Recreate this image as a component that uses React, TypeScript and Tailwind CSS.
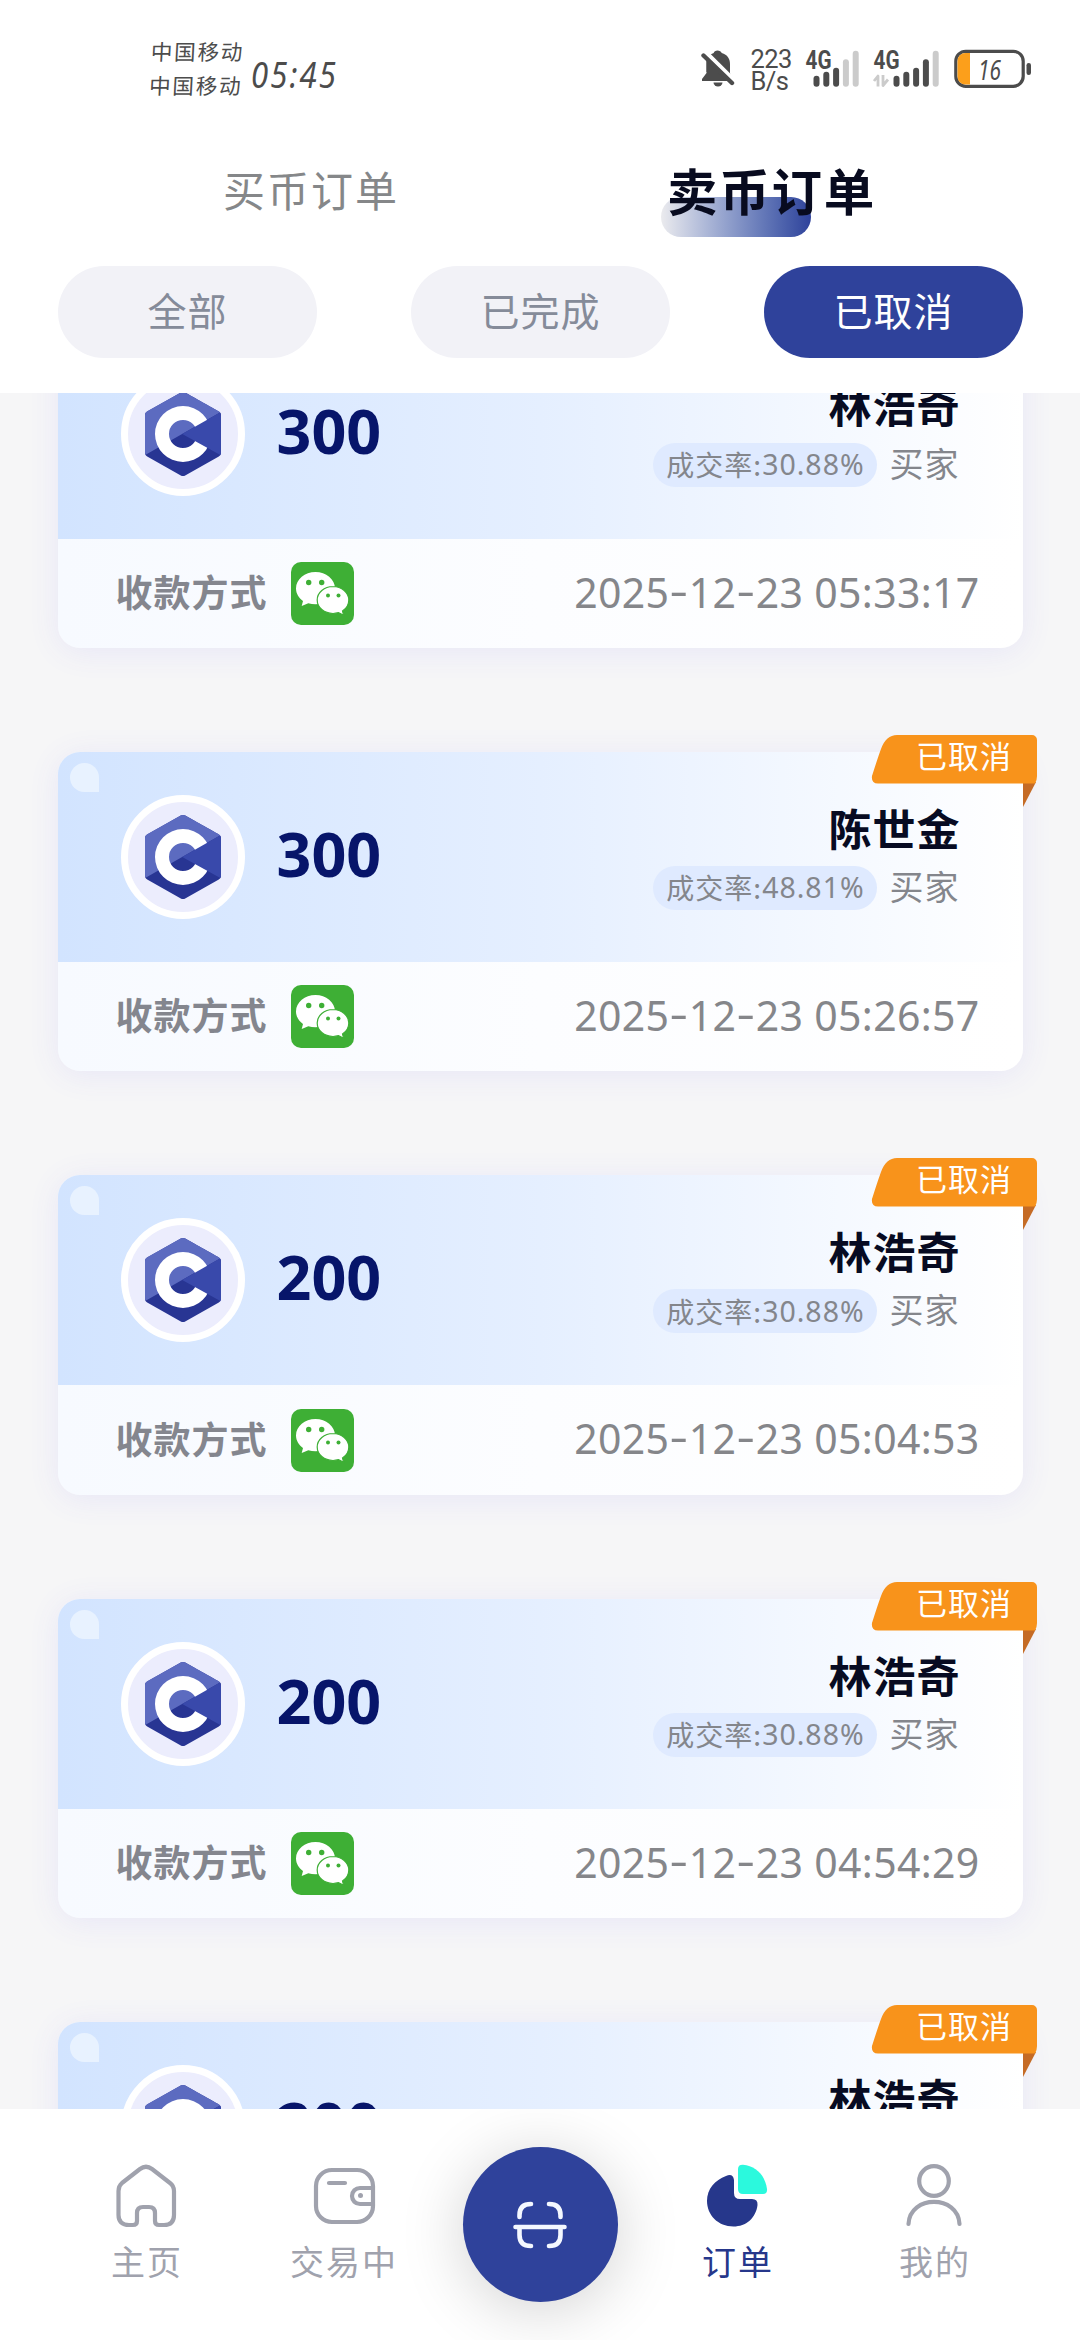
import React from "react";

type Order = { amount: string; name: string; rate: string; time?: string };

const orders: Order[] = [
  { amount: "300", name: "林浩奇", rate: "30.88%", time: "2025-12-23 05:33:17" },
  { amount: "300", name: "陈世金", rate: "48.81%", time: "2025-12-23 05:26:57" },
  { amount: "200", name: "林浩奇", rate: "30.88%", time: "2025-12-23 05:04:53" },
  { amount: "200", name: "林浩奇", rate: "30.88%", time: "2025-12-23 04:54:29" },
  { amount: "200", name: "林浩奇", rate: "30.88%" },
];

function MutedBell() {
  return (
    <svg className="h-[40px] w-[34px]" viewBox="0 0 34 40">
      <path d="M16.500 2.500c-2 0-3.500 1.200-3.800 2.600C8 6.500 5.500 10.500 5.500 15.500V25L1 31v2h31l-2-4-1-4V16c0-5-2.500-9.300-8.300-10.900-.5-1.500-2.200-2.600-4.200-2.600z" fill="#4c4c4c" />
      <path d="M12.500 34.500h9a4.500 4 0 0 1-9 0z" fill="#4c4c4c" />
      <path d="M4 3.500 34 33.500" stroke="#fff" strokeWidth="4.500" />
      <path d="M-1 0h13L5 7v13H-1z" fill="#fff" />
      <path d="M2.500 7.500 31 35" stroke="#4c4c4c" strokeWidth="4.400" strokeLinecap="round" />
      <path d="M6 11v13" stroke="#4c4c4c" strokeWidth="1" />
    </svg>
  );
}

function Signal({ solid, arrows }: { solid: number; arrows?: boolean }) {
  const tops = [27.7, 23.7, 19.7, 11.3, 2.7];
  return (
    <svg className="h-[40px] w-[66px] overflow-visible" viewBox="0 0 66 40">
      <text x="0.500" y="20.500" fontFamily="Roboto" fontWeight="700" fontSize="25" textLength="26" lengthAdjust="spacingAndGlyphs" fill="#4c4c4c">4G</text>
      {tops.map((t, i) => (
        <rect key={t} x={(arrows ? 20.5 : 8.5) + i * 9.8} y={t} width="6" height={38.7 - t} rx="3" fill={i < solid ? "#4c4c4c" : "#cbcbcb"} />
      ))}
      {arrows && (
        <path d="M1 33l4-5v10.500M10 27v10.500l5-6" fill="none" stroke="#cbcbcb" strokeWidth="2.800" strokeLinejoin="round" />
      )}
    </svg>
  );
}

function StatusBar() {
  return (
    <div className="flex h-[140px] items-start justify-between pl-[150px] pr-[48.500px] text-[#4c4c4c]">
      <div className="flex pt-[34px]">
        <div className="w-[101px] -skew-x-3 text-[21.500px] leading-[34px] tracking-[1.900px]">
          <div className="h-[34px]">中国移动</div>
          <div className="h-[34px]">中国移动</div>
        </div>
        <div className="origin-left scale-x-[0.840] pt-[20px] font-['Noto_Sans'] text-[37px] italic leading-[40px] tracking-[2.500px]">05:45</div>
      </div>
      <div className="flex pt-[48px]">
        <div className="w-[50px]"><MutedBell /></div>
        <div className="w-[54px] font-['Roboto'] text-[25.500px] leading-[22px] tracking-[-0.600px]">
          <div>223</div>
          <div>B/s</div>
        </div>
        <div className="w-[68px]"><Signal solid={3} /></div>
        <div className="w-[81px]"><Signal solid={4} arrows /></div>
        <svg className="h-[42px] w-[78px]" viewBox="0 0 78 42">
          <rect x="1.800" y="3.300" width="67.400" height="35" rx="10" fill="#fff" stroke="#4c4c4c" strokeWidth="3.200" />
          <path d="M16 5v31.600H11.500a8 8 0 0 1-8-8V13a8 8 0 0 1 8-8z" fill="#fc9f1b" />
          <text x="24" y="32" fontFamily="Noto Sans" fontStyle="italic" fontSize="28" textLength="23" lengthAdjust="spacingAndGlyphs" fill="#4c4c4c">16</text>
          <rect x="72.500" y="15" width="4.500" height="12" rx="2.200" fill="#4c4c4c" />
        </svg>
      </div>
    </div>
  );
}

function Header() {
  return (
    <header className="h-[393px] shrink-0 bg-white">
      <StatusBar />
      <div className="grid h-[126px] grid-cols-2 px-[77px]">
        <div className="flex justify-center pt-[18px]">
          <span className="ml-[2px] h-[64px] pl-[3px] text-[42px] leading-[62px] tracking-[2px] text-[#858789]">买币订单</span>
        </div>
        <div className="flex justify-center pt-[16px]">
          <div className="relative isolate h-[66px] text-[50.500px] font-bold leading-[66px] tracking-[1.700px] text-[#080b1f]">
            <span className="absolute left-[-6px] top-[41px] -z-10 h-[40px] w-[150px] rounded-full bg-linear-to-r from-[#ebebee] to-[#2f429b]" />
            卖币订单
          </div>
        </div>
      </div>
      <div className="flex justify-between px-[57.500px] text-[39px] leading-[87px] tracking-[1px] text-[#858b99]">
        <div className="h-[92px] w-[259px] rounded-full bg-[#f2f2f7] pl-[1px] text-center">全部</div>
        <div className="h-[92px] w-[259px] rounded-full bg-[#f2f2f7] pl-[1px] text-center">已完成</div>
        <div className="h-[92px] w-[259px] rounded-full bg-[#2f429b] pl-[1px] text-center text-white">已取消</div>
      </div>
    </header>
  );
}

function Coin() {
  return (
    <div className="flex h-[124px] w-[124px] items-center justify-center rounded-full border-[7px] border-white bg-[#ecedfd]">
      <svg className="h-[96px] w-[96px]" viewBox="0 0 48 48">
        <path fill="#283593" d="M22.903 3.286c.679-.381 1.515-.381 2.193 0 3.355 1.883 13.451 7.551 16.807 9.434.679.380 1.097 1.084 1.097 1.846v18.867c0 .762-.418 1.466-1.097 1.847l-16.807 9.434c-.679.381-1.515.381-2.193 0L6.096 35.280C5.418 34.899 5 34.196 5 33.434V14.567c0-.762.418-1.466 1.097-1.847z" />
        <path fill="#5c6bc0" d="M5.304 34.404C5.038 34.048 5 33.710 5 33.255V14.496c0-.758.417-1.458 1.094-1.836l16.748-9.380c.677-.379 1.594-.371 2.271.008l16.714 9.331c.270.152.476.335.660.576z" />
        <path fill="#fff" fillRule="evenodd" d="M24 10a14 14 0 1 1 0 28 14 14 0 0 1 0-28zm0 7a7 7 0 1 0 0 14 7 7 0 0 0 0-14z" />
        <path fill="#3949ab" d="M42.485 13.205c.516.483.506 1.211.506 1.784 0 3.795-.032 14.589.009 18.384.004.396-.127.813-.323 1.127L23.593 24z" />
      </svg>
    </div>
  );
}

function WeChat() {
  return (
    <svg className="h-[63px] w-[63px]" viewBox="0 0 63 63">
      <rect width="63" height="63" rx="10" fill="#3eaf35" />
      <path d="M24.500 10C13.800 10 5 17.200 5 26.500c0 5 2.800 9.500 7 12.500l-1.300 5 6.600-2.800c2.300.7 4.600 1 7.200 1C35 42.200 44 35.500 44 26.500 44 17.200 35 10 24.500 10z" fill="#fff" />
      <path d="M42 24.500c-8.800 0-15.800 6-15.800 13.500S33.200 51.500 42 51.500c2 0 3.800-.3 5.500-.8l5.200 2.600-1.200-4.200c3.800-2.500 6.300-6.500 6.300-11.100C57.800 30.500 50.800 24.500 42 24.500z" fill="#fff" stroke="#3eaf35" strokeWidth="1.200" />
      <g fill="#3eaf35">
        <circle cx="17.700" cy="20.500" r="2.700" />
        <circle cx="30.700" cy="20.500" r="2.700" />
        <circle cx="37" cy="33.500" r="2" />
        <circle cx="47.500" cy="33.500" r="2" />
      </g>
    </svg>
  );
}

function CancelledRibbon() {
  return (
    <div className="absolute right-[-15.500px] top-[-17px] h-[73px] w-[167px]">
      <svg className="absolute inset-0" width="167" height="73" viewBox="0 0 167 73">
        <path d="M152 47h13l-13 25z" fill="#c56b25" />
        <path d="M26 0H161a5 5 0 0 1 5 5V41a14 14 0 0 1-2 7.500H7q-7 0-6-7.500Q7 22 10 14 15 0 26 0z" fill="#f8931b" />
      </svg>
      <span className="relative block pl-[45px] text-[31px] leading-[40px] tracking-[1px] text-white">已取消</span>
    </div>
  );
}

function Timestamp({ value }: { value: string }) {
  return (
    <span className="whitespace-pre font-['Noto_Sans'] text-[41px] leading-[56px] tracking-[0.300px] text-[#85868a]">
      {value.split("").map((ch, i) =>
        ch === "-" ? (
          <span key={i} className="inline-block w-[19.500px] origin-center -translate-y-[2px] scale-x-[1.400] text-center tracking-normal">-</span>
        ) : (
          ch
        )
      )}
    </span>
  );
}

function OrderCard({ order }: { order: Order }) {
  return (
    <article className="relative h-[319.400px] shrink-0 rounded-[22px] bg-linear-to-r from-[#f7faff] via-[#fcfdff] to-white shadow-[0_4px_32px_rgba(90,80,240,0.090)]">
      <div className="relative flex h-[210px] justify-between rounded-t-[22px] bg-linear-to-r from-[#d2e4ff] via-[#e5efff] to-white pl-[63px] pr-[63px]">
        <span className="absolute left-[12px] top-[11px] h-[29px] w-[29px] rounded-full rounded-br-none bg-[#e8f2ff]" />
        <div className="flex items-start pt-[43px]">
          <Coin />
          <span className="ml-[32px] mt-[19px] font-['Noto_Sans'] text-[61px] font-bold leading-[80px] text-[#07156a]">{order.amount}</span>
        </div>
        <div className="flex flex-col items-end pt-[45px]">
          <div className="-mr-[1px] h-[69px] text-[43px] font-bold leading-[61px] tracking-[1px] text-[#070b22]">{order.name}</div>
          <div className="flex items-center text-[#84868c]">
            <div className="mr-[13px] flex h-[44px] w-[224px] items-center justify-center rounded-full bg-[#dfeaff] pl-[2px] text-[28px] leading-[41px] tracking-[1px]">
              成交率:<span className="font-['Noto_Sans'] text-[28.500px]">{order.rate}</span>
            </div>
            <span className="-mt-[4px] text-[34px] leading-[44px] tracking-[1px]">买家</span>
          </div>
        </div>
      </div>
      {order.time && (
        <div className="flex h-[109px] items-center justify-between pl-[58px] pr-[43px]">
          <div className="flex items-center pt-[1px]">
            <span className="-mt-[5px] mr-[23px] text-[37px] font-bold leading-[50px] tracking-[1px] text-[#84868e]">收款方式</span>
            <WeChat />
          </div>
          <div className="-mt-[3px]"><Timestamp value={order.time} /></div>
        </div>
      )}
      <CancelledRibbon />
    </article>
  );
}

function NavItem({ label, active, children }: { label: string; active?: boolean; children: React.ReactNode }) {
  return (
    <div className={active ? "flex w-[197px] flex-col items-center pt-[54px] text-[#26378b]" : "flex w-[197px] flex-col items-center pt-[54px] text-[#a0a2ad]"}>
      <svg className="h-[66px] w-[66px]" viewBox="0 0 66 66" fill="none" stroke="currentColor" strokeWidth="4.200" strokeLinecap="round" strokeLinejoin="round">
        {children}
      </svg>
      <span className="mt-[7px] pl-[2px] text-[34px] leading-[50px] tracking-[2px]">{label}</span>
    </div>
  );
}

function BottomNav() {
  return (
    <nav className="flex h-[231px] shrink-0 justify-center overflow-hidden bg-white">
      <NavItem label="主页">
        <path d="M5.500 28q0-5 3.500-8L27 6q6-4.500 12 0l18 14q4 3 4 8V52q0 10-10 10H46q-4 0-4-4V50q0-6-6-6H30q-6 0-6 6v8q0 4-4 4H16Q5.500 62 5.500 52z" />
      </NavItem>
      <NavItem label="交易中">
        <rect x="6" y="7" width="57" height="52" rx="16" />
        <path d="M19 20H35M63 25H50a8 8 0 0 0 0 16H63" />
        <circle cx="50.500" cy="32.500" r="2.500" fill="currentColor" stroke="none" />
      </NavItem>
      <div className="flex w-[197px] justify-center pt-[38px]">
        <div className="flex h-[155px] w-[155px] items-center justify-center rounded-full bg-[#2f429b] shadow-[0_8px_64px_rgba(0,0,0,0.180)]">
          <svg className="h-[60px] w-[60px]" viewBox="0 0 60 60" fill="none" stroke="#f4f8ff" strokeWidth="4.600" strokeLinecap="round">
            <path d="M5.500 32H54.500M9.500 22V20Q9.500 9 21 9M39 9Q50.500 9 50.500 20V22M9.500 34V40Q9.500 51 21 51M39 51Q50.500 51 50.500 40V34" />
          </svg>
        </div>
      </div>
      <NavItem label="订单" active>
        <path d="M22 13q7-3 8 4V30q0 6 6 6H48q6 0 5.500 6C52 55 42 63.500 29.500 63.500 14 63.500 3 52 3 38 3 26 11 17 22 13z" fill="#26378b" stroke="none" />
        <path d="M34 6q0-4.500 5-4.300C52 3 61 12 63 26q.5 5-4 5H39q-5 0-5-5z" fill="#2bf9dd" stroke="none" />
      </NavItem>
      <NavItem label="我的">
        <circle cx="33" cy="18" r="14.800" />
        <path d="M7.500 61C9 31.500 57 31.500 58.500 61" />
      </NavItem>
    </nav>
  );
}

export default function App() {
  return (
    <div className="flex h-[2340px] w-[1080px] flex-col overflow-hidden bg-[#f6f6f7] font-['Noto_Sans_CJK_SC',sans-serif]">
      <Header />
      <main className="min-h-0 flex-1 overflow-hidden">
        <div className="-mt-[64.500px] flex flex-col gap-[104px] px-[57.500px]">
          {orders.map((order, i) => (
            <OrderCard key={i} order={order} />
          ))}
        </div>
      </main>
      <BottomNav />
    </div>
  );
}
